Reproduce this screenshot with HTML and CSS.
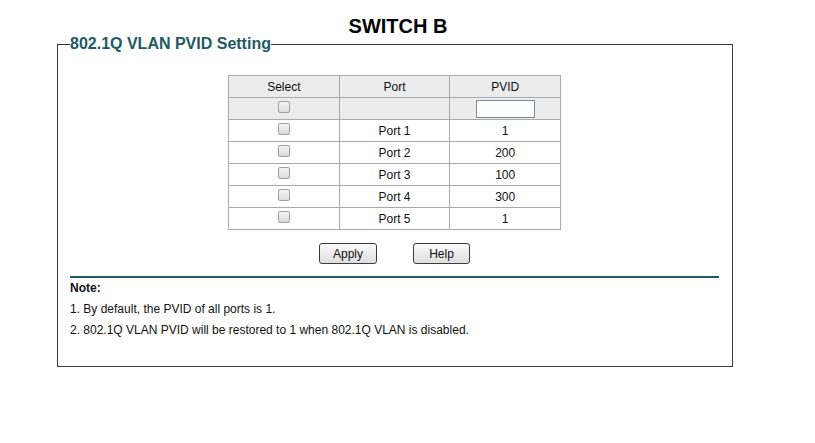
FILE: index.html
```html
<!DOCTYPE html>
<html lang="en">
<head>
  <meta charset="UTF-8" />
  <title>802.1Q VLAN PVID Setting</title>
  <link rel="stylesheet" href="styles.css">
</head>
<body>
  <div class="page">
    <h1 class="title">SWITCH B</h1>

    <fieldset class="panel">
      <legend>802.1Q VLAN PVID Setting</legend>

      <table class="pvid-table">
        <tr class="head">
          <th>Select</th><th>Port</th><th>PVID</th>
        </tr>
        <tr class="filter">
          <td><input type="checkbox" class="chk"></td>
          <td></td>
          <td><input type="text" class="pvid-input"></td>
        </tr>
        <tr><td><input type="checkbox" class="chk"></td><td>Port 1</td><td>1</td></tr>
        <tr><td><input type="checkbox" class="chk"></td><td>Port 2</td><td>200</td></tr>
        <tr><td><input type="checkbox" class="chk"></td><td>Port 3</td><td>100</td></tr>
        <tr><td><input type="checkbox" class="chk"></td><td>Port 4</td><td>300</td></tr>
        <tr><td><input type="checkbox" class="chk"></td><td>Port 5</td><td>1</td></tr>
      </table>

      <div class="actions">
        <button class="btn btn-apply">Apply</button>
        <button class="btn btn-help">Help</button>
      </div>

      <div class="note">
        <div class="note-title">Note:</div>
        <div>1. By default, the PVID of all ports is 1.</div>
        <div>2. 802.1Q VLAN PVID will be restored to 1 when 802.1Q VLAN is disabled.</div>
      </div>
    </fieldset>
  </div>
</body>
</html>
```

FILE: styles.css
```css
:root {
  --teal: #1d5a62;
  --line: #a9a9a9;
  --shade: #ececec;
}

body {
  margin: 0;
  font-family: Arial, "Liberation Sans", sans-serif;
  font-size: 12px;
  color: #111;
  background: #fff;
}

.page {
  width: 796px;
}

.title {
  margin: 0;
  padding-top: 15px;
  text-align: center;
  font-size: 20px;
  line-height: 23px;
  font-weight: bold;
  color: #000;
}

.panel {
  margin: -3px 0 0 57px;
  width: 649px;
  padding: 0 13px 25px 12px;
  border: 1px solid #3a3a3a;
  min-width: 0;
}

.panel legend {
  padding: 0;
  font-size: 16px;
  line-height: 18px;
  font-weight: bold;
  color: var(--teal);
}

.pvid-table {
  margin: 22px auto 0;
  border-collapse: collapse;
  width: 333px;
  table-layout: fixed;
}

.pvid-table th,
.pvid-table td {
  border: 1px solid var(--line);
  height: 21px;
  padding: 0;
  text-align: center;
  font-weight: normal;
  font-size: 12px;
  color: #111;
}

.pvid-table .head th,
.pvid-table .filter td {
  background: var(--shade);
}

.chk {
  appearance: none;
  -webkit-appearance: none;
  width: 12px;
  height: 12px;
  margin: 0;
  vertical-align: middle;
  border: 1px solid #a0a0a0;
  border-radius: 2px;
  background: linear-gradient(#f4f4f4, #dcdcdc);
  position: relative;
  top: -2px;
}

.pvid-input {
  width: 57px;
  height: 16px;
  padding: 0;
  margin: 0;
  vertical-align: middle;
  border: 1px solid #7d8a96;
  background: #fff;
  box-sizing: content-box;
}

.actions {
  display: flex;
  justify-content: center;
  gap: 36px;
  margin-top: 13px;
}

.btn {
  height: 21px;
  padding: 0;
  font-family: Arial, "Liberation Sans", sans-serif;
  font-size: 12px;
  color: #111;
  border: 1px solid #3c3c3c;
  border-radius: 3px;
  background: linear-gradient(#fafafa, #dedede);
}

.btn-apply { width: 58px; }
.btn-help { width: 57px; }

.note {
  margin-top: 12px;
  border-top: 2px solid var(--teal);
  padding-top: 0;
  line-height: 21px;
}

.note-title {
  font-weight: bold;
}
```
